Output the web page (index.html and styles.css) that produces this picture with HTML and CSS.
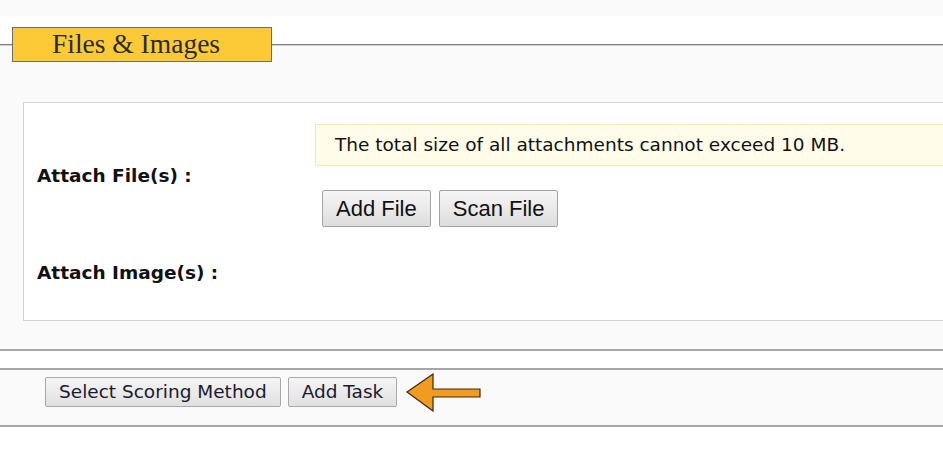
FILE: index.html
```html
<!DOCTYPE html>
<html lang="en">
<head>
    <meta charset="UTF-8">
    <meta name="viewport" content="width=device-width, initial-scale=1.0">
    <title>Files &amp; Images</title>
    <link rel="stylesheet" href="styles.css">
</head>
<body>
    <div class="top-strip"></div>
    <div class="section-head">
        <div class="legend">Files &amp; Images</div>
    </div>

    <div class="content">
        <div class="attach-box">
            <div class="attach-label">Attach File(s) :</div>
            <div class="attach-files">
                <div class="notice">The total size of all attachments cannot exceed 10 MB.</div>
                <div class="file-buttons">
                    <button class="file-btn">Add File</button>
                    <button class="file-btn">Scan File</button>
                </div>
            </div>
            <div class="attach-label image-label">Attach Image(s) :</div>
            <div></div>
        </div>
    </div>

    <div class="separator"></div>
    <div class="actions">
        <button class="action-btn">Select Scoring Method</button>
        <button class="action-btn">Add Task</button>
        <!-- arrow pointing at Add Task -->
        <svg class="arrow" width="78" height="40" viewBox="0 0 78 40">
            <path d="M2 19 L28 1 L28 16 L75 16 L75 24 L28 24 L28 38 Z" fill="#f39b1e" stroke="#3a2a10" stroke-width="1.2" stroke-linejoin="miter"/>
        </svg>
    </div>
</body>
</html>
```

FILE: styles.css
```css
html,
body {
    margin: 0;
    background: #ffffff;
    overflow: hidden;
    font-family: "DejaVu Sans", Verdana, sans-serif;
}
.top-strip {
    height: 16px;
    background: #fafafa;
}
.section-head {
    height: 46px;
    box-sizing: border-box;
    padding: 11px 0 0 12px;
    /* white above the rule, light grey below */
    background: linear-gradient(#ffffff 0 28px, #7e7e7e 28px 29px, #cfcfcf 29px 30px, #fafafa 30px);
}
.legend {
    width: 260px;
    height: 35px;
    box-sizing: border-box;
    border: 1px solid #6e6e6e;
    background: #fdca37;
    padding-left: 39px;
    font-family: "Liberation Serif", "Times New Roman", serif;
    font-size: 27.5px;
    line-height: 32px;
    color: #2b2b2b;
}
.content {
    background: #fafafa;
    padding: 40px 0 28px 23px;
}
.attach-box {
    display: grid;
    grid-template-columns: 291px 1fr;
    row-gap: 35px;
    margin-right: -20px;
    border: 1px solid #d3d3d3;
    background: #ffffff;
    padding: 21px 0 36px 0;
}
.attach-label {
    align-self: center;
    padding-left: 13px;
    font-size: 18.5px;
    font-weight: bold;
    line-height: 22px;
    color: #111;
}
.notice {
    height: 42px;
    box-sizing: border-box;
    border: 1px solid #f4e9a6;
    background: #fffdea;
    padding-left: 19px;
    font-size: 18.5px;
    line-height: 40px;
    color: #111;
}
.file-buttons {
    display: flex;
    gap: 8px;
    margin: 24px 0 0 7px;
}
.file-btn {
    font-family: "Liberation Sans", Arial, sans-serif;
    font-size: 22px;
    line-height: 25px;
    padding: 5px 13px;
    color: #111;
    border: 1px solid #a3a3a3;
    border-radius: 2px;
    background: linear-gradient(#f6f6f6, #dddddd);
}
.separator {
    height: 17px;
    border-top: 2px solid #a6a6a6;
    border-bottom: 2px solid #a6a6a6;
    background: #ffffff;
}
.actions {
    display: flex;
    align-items: flex-start;
    gap: 7px;
    height: 57px;
    box-sizing: border-box;
    padding: 7px 0 0 45px;
    background: #fafafa;
    border-bottom: 2px solid #a6a6a6;
}
.action-btn {
    font-family: "DejaVu Sans", Verdana, sans-serif;
    font-size: 18.5px;
    line-height: 22px;
    padding: 3px 13px;
    color: #1a1a2e;
    border: 1px solid #a8a8a8;
    border-radius: 2px;
    background: linear-gradient(#f5f5f5, #e0e0e0);
}
.arrow {
    margin: -4px 0 0 1px;
}
```
